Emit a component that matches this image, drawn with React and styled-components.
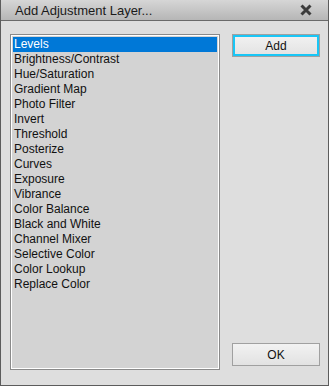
import styled, { createGlobalStyle } from "styled-components";

const GlobalStyle = createGlobalStyle`
  html, body {
    margin: 0;
    padding: 0;
    background: #dedede;
  }
  body {
    font-family: "Liberation Sans", Tahoma, Arial, sans-serif;
  }
`;

const Dialog = styled.div`
  width: 329px;
  height: 386px;
  box-sizing: border-box;
  border: 1px solid #5c5c5c;
  border-top: none;
  background: #dedede;
  display: flex;
  flex-direction: column;
`;

const TitleBar = styled.div`
  height: 21px;
  flex: none;
  box-sizing: border-box;
  border-bottom: 1px solid #6a6a6a;
  background: linear-gradient(#d6d6d6, #b6b6b6);
  display: flex;
  align-items: center;
  justify-content: space-between;
  padding: 0 16px 0 14px;
  color: #1a1a1a;
  font-size: 13px;
`;

const Body = styled.div`
  flex: 1;
  display: flex;
  padding: 13px 8px 15px 9px;
  gap: 11px;
`;

const ListBox = styled.div`
  width: 212px;
  box-sizing: border-box;
  border: 1px solid #8a8a8a;
  background: #d3d3d3;
  box-shadow: inset 0 0 0 1px #ffffff;
  padding: 2px;
  display: flex;
  flex-direction: column;
`;

const Item = styled.div`
  height: 15px;
  line-height: 15px;
  padding-left: 1px;
  font-size: 12px;
  color: ${props => (props.selected ? "#ffffff" : "#111111")};
  background: ${props => (props.selected ? "#0078d7" : "transparent")};
  white-space: nowrap;
`;

const Side = styled.div`
  flex: 1;
  display: flex;
  flex-direction: column;
  justify-content: space-between;
  padding-bottom: 4px;
  padding-left: 1px;
`;

const Button = styled.button`
  width: 88px;
  height: 23px;
  box-sizing: border-box;
  font-family: "Liberation Sans", Tahoma, Arial, sans-serif;
  font-size: 12px;
  color: #111111;
  background: linear-gradient(#f2f2f2, #e2e2e2);
  border: 1px solid #a0a0a0;
  box-shadow: ${props => (props.primary ? "inset 0 0 0 2px #19c6f6" : "none")};
  padding: 0;
`;

const CloseIcon = () => (
  <svg width="12" height="12" viewBox="0 0 12 12">
    <path d="M1.5 1.5 L10.5 10.5 M10.5 1.5 L1.5 10.5" stroke="#3c3c3c" strokeWidth="3" />
  </svg>
);

const items = [
  "Levels",
  "Brightness/Contrast",
  "Hue/Saturation",
  "Gradient Map",
  "Photo Filter",
  "Invert",
  "Threshold",
  "Posterize",
  "Curves",
  "Exposure",
  "Vibrance",
  "Color Balance",
  "Black and White",
  "Channel Mixer",
  "Selective Color",
  "Color Lookup",
  "Replace Color",
];

const App = () => {
  return (
    <>
      <GlobalStyle />
      <Dialog>
        <TitleBar>
          <span>Add Adjustment Layer...</span>
          <CloseIcon />
        </TitleBar>
        <Body>
          <ListBox>
            {items.map((item, i) => (
              <Item key={item} selected={i === 0}>
                {item}
              </Item>
            ))}
          </ListBox>
          <Side>
            <Button primary>Add</Button>
            <Button>OK</Button>
          </Side>
        </Body>
      </Dialog>
    </>
  );
};

export default App;
